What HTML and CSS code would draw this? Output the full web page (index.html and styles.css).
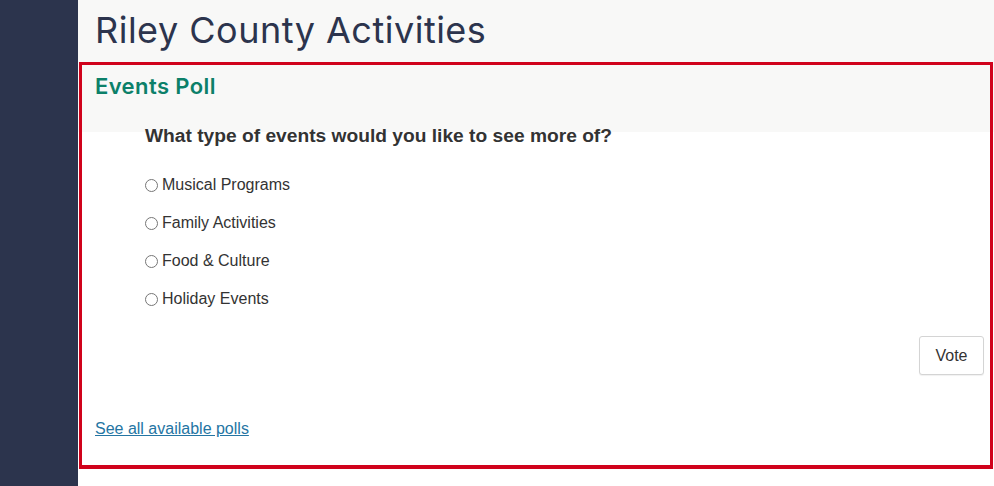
FILE: index.html
```html
<!DOCTYPE html>
<html lang="en">
<head>
<meta charset="utf-8">
<title>Riley County Activities</title>
<link rel="stylesheet" href="styles.css">
</head>
<body>
<div class="page">
  <aside class="sidebar"></aside>
  <main class="main">
    <h1 class="page-title">Riley County Activities</h1>
    <section class="poll">
      <h2 class="poll-title">Events Poll</h2>
      <div class="poll-body">
        <h3 class="question">What type of events would you like to see more of?</h3>
        <ul class="options">
          <li><label class="option"><input type="radio" name="ev"> Musical Programs</label></li>
          <li><label class="option"><input type="radio" name="ev"> Family Activities</label></li>
          <li><label class="option"><input type="radio" name="ev"> Food &amp; Culture</label></li>
          <li><label class="option"><input type="radio" name="ev"> Holiday Events</label></li>
        </ul>
      </div>
      <div class="actions"><button class="vote" type="button">Vote</button></div>
      <a class="all-polls" href="#">See all available polls</a>
    </section>
  </main>
</div>
</body>
</html>
```
FILE: styles.css
```css
html, body {
  margin: 0;
  padding: 0;
}
body {
  font-family: "Liberation Sans", Arial, sans-serif;
  color: #333;
  background: #fff;
}
.page {
  display: flex;
  height: 486px;
  overflow: hidden;
}
.sidebar {
  width: 78px;
  flex: 0 0 78px;
  background: #2c344d;
}
.main {
  flex: 1;
  padding: 0 1px 0 1px;
  background: linear-gradient(#f8f8f7 0, #f8f8f7 132px, #fff 132px);
}
.page-title {
  margin: 0;
  padding: 8px 0 0 16px;
  height: 62px;
  box-sizing: border-box;
  font-family: Inter, "Open Sans", sans-serif;
  font-weight: 400;
  font-size: 36px;
  line-height: 44px;
  letter-spacing: 0.5px;
  color: #2c344d;
}
.poll {
  border: 3px solid #d0021b;
  border-bottom-width: 4px;
  height: 407px;
  box-sizing: border-box;
  padding: 0 6px 0 13px;
  display: flex;
  flex-direction: column;
}
.poll-title {
  margin: 7px 0 0;
  font-family: Inter, "Open Sans", sans-serif;
  font-weight: 600;
  font-size: 22px;
  line-height: 28px;
  letter-spacing: 0.4px;
  color: #0c8069;
}
.poll-body {
  padding-left: 50px;
}
.question {
  margin: 25px 0 0;
  font-size: 19.2px;
  font-weight: bold;
  line-height: 22px;
  color: #333;
}
.options {
  list-style: none;
  margin: 28px 0 0;
  padding: 0;
  display: flex;
  flex-direction: column;
  gap: 18px;
}
.option {
  display: flex;
  align-items: center;
  font-size: 16px;
  line-height: 20px;
  color: #333;
}
.option input {
  margin: 0 4px 0 0;
  width: 13px;
  height: 13px;
}
.actions {
  display: flex;
  justify-content: flex-end;
  margin-top: 27px;
}
.vote {
  font-family: "Liberation Sans", Arial, sans-serif;
  font-size: 16px;
  color: #333;
  background: #fff;
  border: 1px solid #d4d4d4;
  border-radius: 3px;
  width: 65px;
  height: 39px;
  padding: 0;
  box-shadow: 0 1px 1px rgba(0,0,0,0.06);
}
.all-polls {
  margin-top: 44px;
  align-self: flex-start;
  font-size: 16px;
  line-height: 20px;
  color: #2475a3;
  text-decoration: underline;
}
```
